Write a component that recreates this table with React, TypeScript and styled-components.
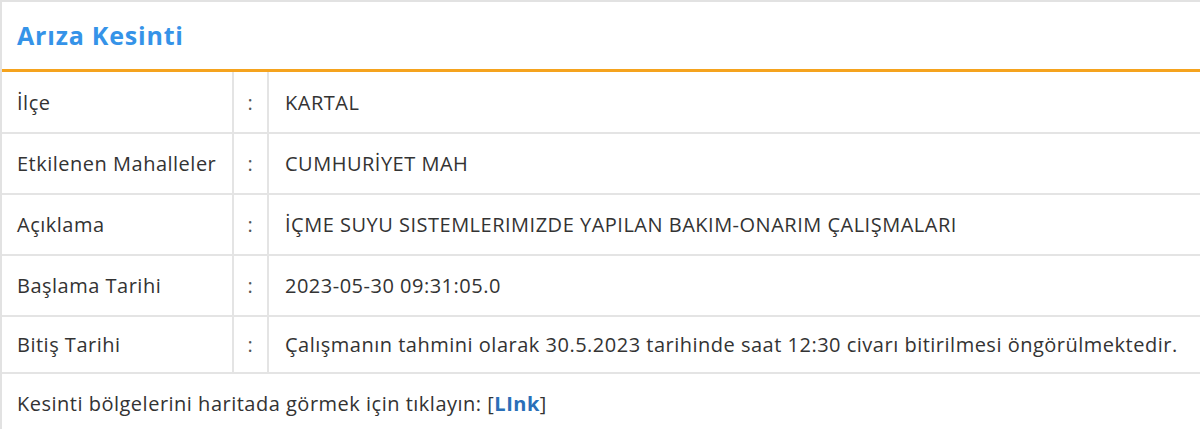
import { createGlobalStyle } from 'styled-components'
import styled from 'styled-components'

const GlobalStyle = createGlobalStyle`
  html, body {
    margin: 0;
    padding: 0;
    background: #fff;
  }
  body {
    font-family: 'Open Sans', 'Liberation Sans', sans-serif;
    color: #333;
  }
`

type Row = { label: string; value: string }

const rows: Row[] = [
  { label: 'İlçe', value: 'KARTAL' },
  { label: 'Etkilenen Mahalleler', value: 'CUMHURİYET MAH' },
  { label: 'Açıklama', value: 'İÇME SUYU SISTEMLERIMIZDE YAPILAN BAKIM-ONARIM ÇALIŞMALARI' },
  { label: 'Başlama Tarihi', value: '2023-05-30 09:31:05.0' },
  {
    label: 'Bitiş Tarihi',
    value: 'Çalışmanın tahmini olarak 30.5.2023 tarihinde saat 12:30 civarı bitirilmesi öngörülmektedir.',
  },
]

const App = () => {
  return (
    <>
      <GlobalStyle />
      <Panel>
        <Header>
          <Title>Arıza Kesinti</Title>
        </Header>
        <InfoTable>
          <tbody>
            {rows.map((row, i) => (
              <InfoRow key={row.label} $last={i === rows.length - 1}>
                <LabelCell>{row.label}</LabelCell>
                <ColonCell>:</ColonCell>
                <ValueCell>{row.value}</ValueCell>
              </InfoRow>
            ))}
          </tbody>
        </InfoTable>
        <Footer>
          Kesinti bölgelerini haritada görmek için tıklayın: [<MapLink href="#">LInk</MapLink>]
        </Footer>
      </Panel>
    </>
  )
}

const Panel = styled.div`
  width: 1200px;
  height: 429px;
  box-sizing: border-box;
  border-top: 2px solid #e2e2e2;
  border-left: 2px solid #e2e2e2;
  background: #fff;
  overflow: hidden;
`

const Header = styled.div`
  height: 67px;
  display: flex;
  align-items: center;
  padding-left: 15px;
  border-bottom: 3px solid #f5a31e;
`

const Title = styled.h2`
  margin: 0;
  font-size: 25px;
  font-weight: 700;
  color: #3593e8;
  letter-spacing: 0.8px;
  margin-top: -2px;
`

const InfoTable = styled.table`
  width: 100%;
  border-collapse: collapse;
  font-size: 20px;
  letter-spacing: 0.5px;
  color: #333;

  td {
    padding: 0;
    vertical-align: middle;
    white-space: nowrap;
  }
`

const InfoRow = styled.tr<{ $last?: boolean }>`
  height: ${(p) => (p.$last ? '57px' : '61px')};
  border-bottom: 2px solid #e4e4e4;
`

const LabelCell = styled.td`
  width: 215px;
  padding-left: 15px !important;
  border-right: 2px solid #e4e4e4;
`

const ColonCell = styled.td`
  width: 33px;
  text-align: center;
  color: #555;
  border-right: 2px solid #e4e4e4;
`

const ValueCell = styled.td`
  padding-left: 16px !important;
`

const Footer = styled.div`
  padding: 16px 15px;
  font-size: 20px;
  letter-spacing: 0.5px;
  line-height: 28px;
  color: #333;
`

const MapLink = styled.a`
  color: #2a6fb8;
  font-weight: 700;
  text-decoration: none;
`

export default App
